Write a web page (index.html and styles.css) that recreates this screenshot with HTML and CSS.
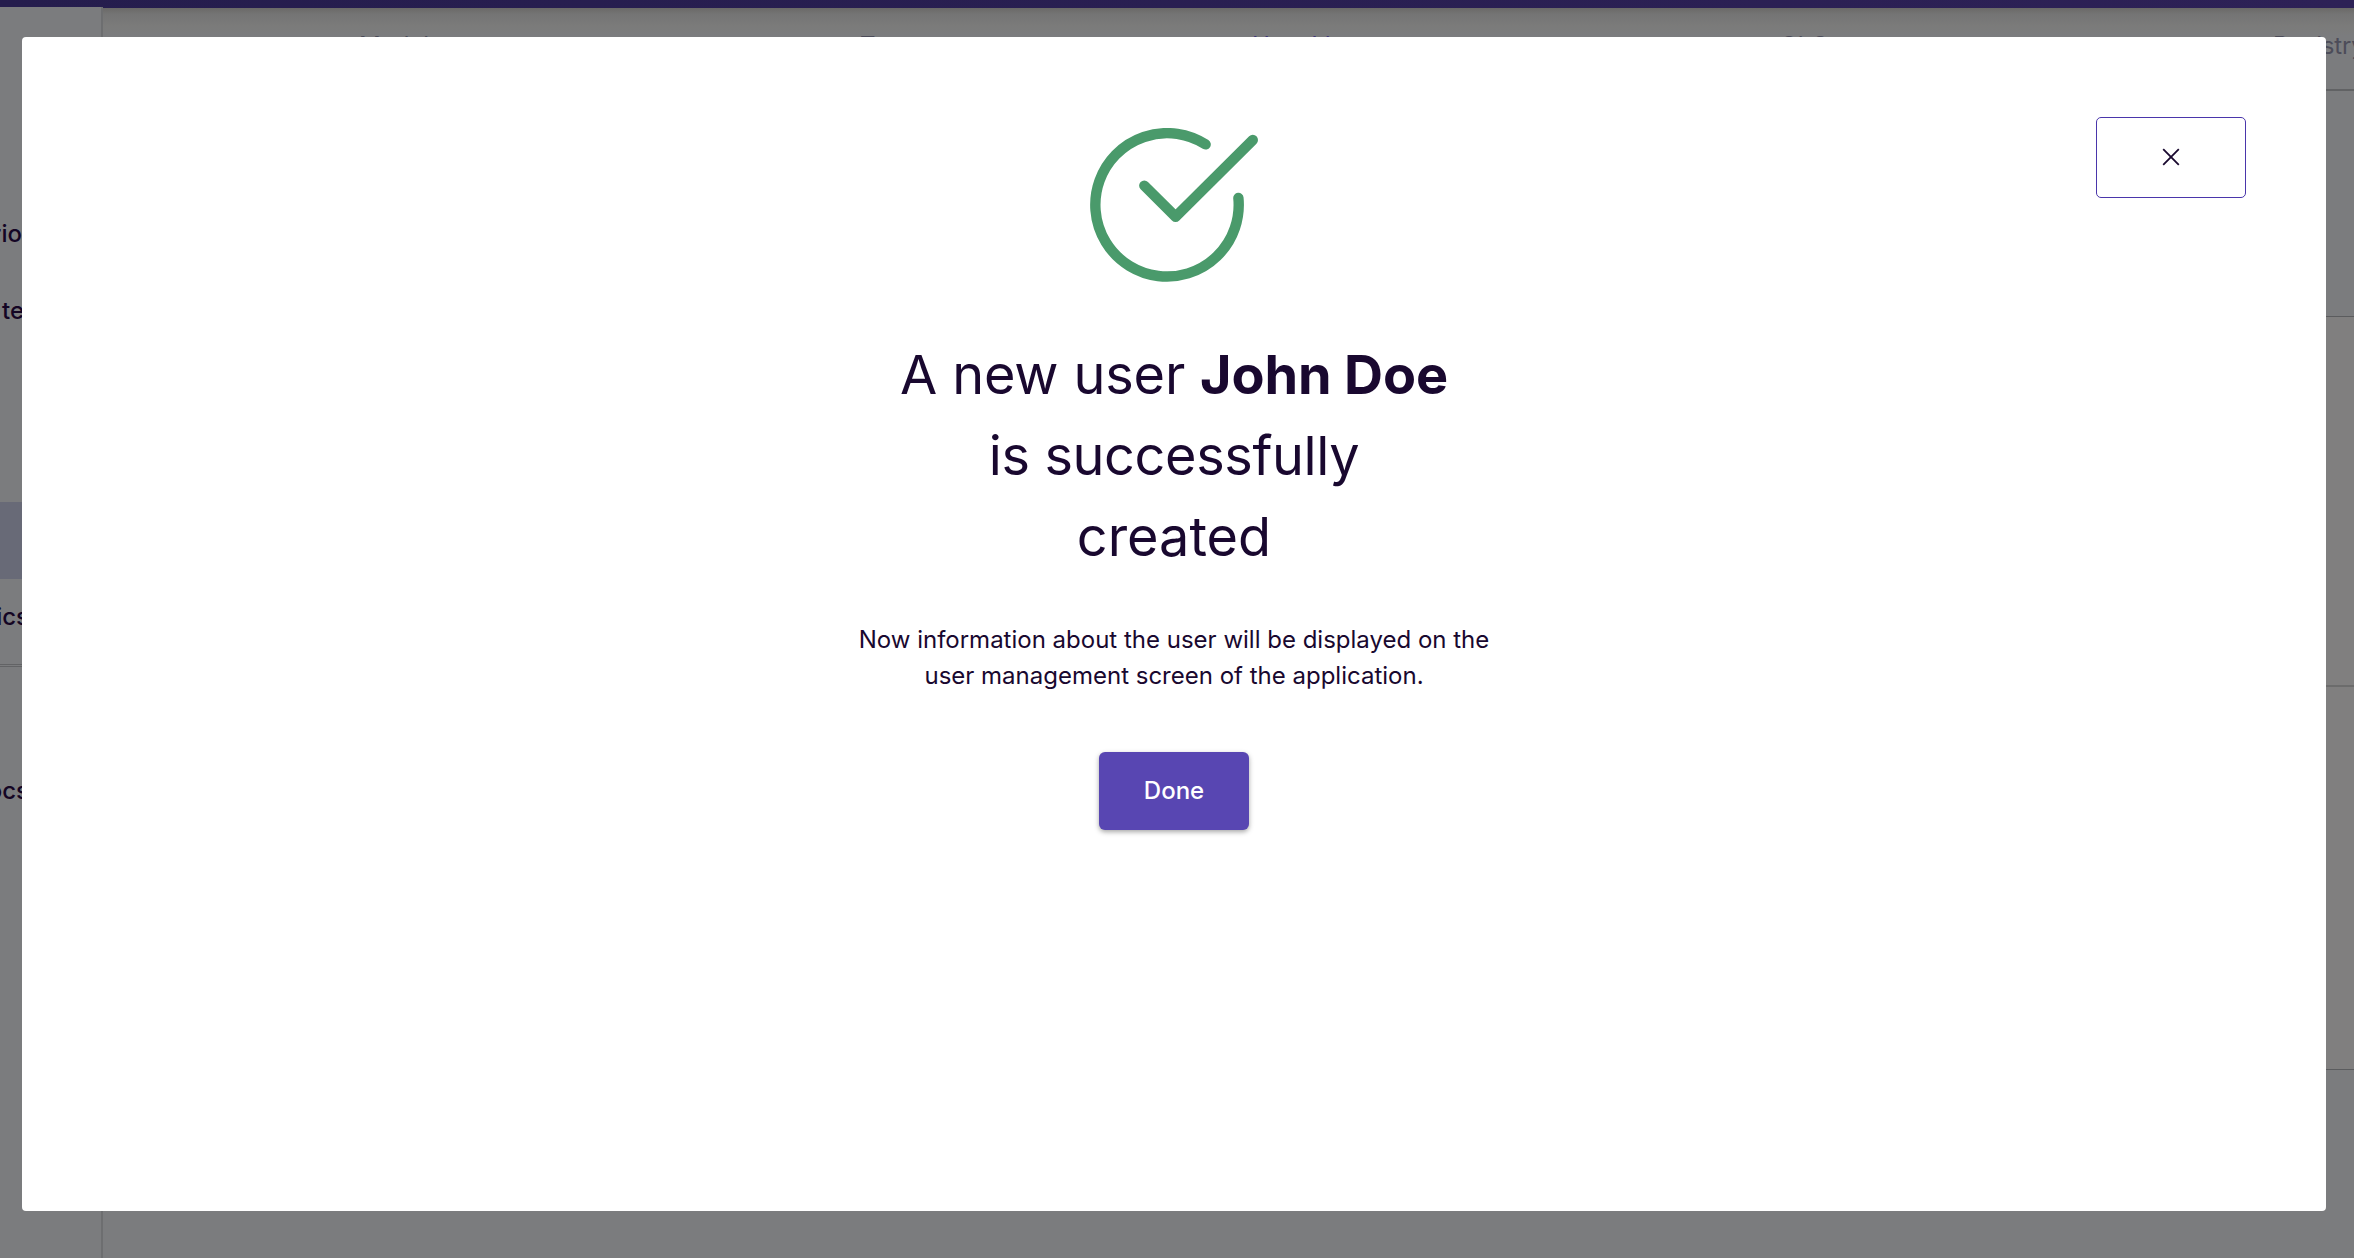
FILE: index.html
```html
<!DOCTYPE html>
<html lang="en">
<head>
<meta charset="utf-8">
<title>User created</title>
<link rel="stylesheet" href="styles.css">
</head>
<body>
<div class="app">
  <header class="topbar"></header>
  <div class="layout">
    <nav class="sidebar">
      <span class="nav-item nav-scenarios">rio</span>
      <span class="nav-item nav-templates">te</span>
      <span class="nav-item nav-active"></span>
      <span class="nav-item nav-topics">ics</span>
      <span class="nav-rule"></span>
      <span class="nav-item nav-docs">ocs</span>
    </nav>
    <main class="content">
      <div class="tabs">
        <span class="tab">Modules</span>
        <span class="tab">Teams</span>
        <span class="tab tab-active">User List</span>
        <span class="tab">GitOps</span>
        <span class="tab">Registry</span>
      </div>
      <div class="panel panel-filter"></div>
      <div class="panel panel-list"></div>
      <div class="panel panel-details"></div>
    </main>
  </div>
</div>
<div class="overlay">
  <section class="modal" role="dialog" aria-modal="true">
    <button class="close" aria-label="Close">
      <svg width="18" height="18" viewBox="0 0 18 18" fill="none" stroke="currentColor" stroke-width="1.8"><path d="M1.2 1.2 16.8 16.8M16.8 1.2 1.2 16.8"/></svg>
    </button>
    <svg class="success" width="168" height="154" viewBox="0 0 168 154" fill="none" stroke="currentColor" stroke-width="10.4" stroke-linecap="round" stroke-linejoin="round">
      <path d="M115.6 16.4A71.7 71.7 0 1 0 148.4 70"/>
      <path d="M54.3 57.6 85.6 88.8 162.8 12"/>
    </svg>
    <h1 class="title"><span class="title-lead">A new user <strong>John Doe</strong></span><br><span class="title-status">is successfully</span><br>created</h1>
    <p class="message">Now information about the user will be displayed on the<br>user management screen of the application.</p>
    <button class="done">Done</button>
  </section>
</div>
</body>
</html>
```
FILE: styles.css
```css
* { box-sizing: border-box; }
body {
  margin: 0;
  height: 1258px;
  overflow: hidden;
  font-family: Inter, "Liberation Sans", sans-serif;
  color: #19082f;
}
.app { height: 1258px; display: flex; flex-direction: column; background: #7b7c7e; }
.topbar { height: 8px; flex: none; background: linear-gradient(90deg, #251d4d, #2d2156); }
.layout { flex: 1; display: flex; }
.sidebar {
  width: 103px;
  flex: none;
  margin-top: -1px;
  display: flex;
  flex-direction: column;
  background: #7b7c7e;
  border-right: 2px solid #6d6e70;
  font-size: 24px;
  font-weight: 500;
  color: #140524;
}
.nav-item { height: 77px; line-height: 77px; display: flex; justify-content: flex-end; white-space: nowrap; }
.nav-scenarios { margin-top: 188px; width: 22px; }
.nav-templates { width: 24px; }
.nav-active { width: 100%; margin-top: 153px; background: #686a77; }
.nav-topics { width: 29px; line-height: 76px; }
.nav-rule { margin-top: 8px; height: 3px; border: solid #626365; border-width: 1px 0; }
.nav-docs { margin-top: 85px; width: 29px; }
.content { flex: 1; min-width: 0; display: flex; flex-direction: column; overflow: hidden; }
.tabs {
  height: 83px;
  flex: none;
  display: grid;
  grid-template-columns: 501px 392px 528px 493px auto;
  padding-left: 256px;
  border-bottom: 2px solid #616264;
  background: linear-gradient(#6a6967, #747474 6px, #7b7b7a 18px, #7b7c7e 28px);
}
.tab { font-size: 24px; line-height: 75px; color: #4c4c59; letter-spacing: -.2px; white-space: nowrap; }
.tab-active { color: #41377a; }
.panel { border-bottom: 1px solid #5b5c5e; flex: none; }
.panel-filter { height: 226px; }
.panel-list { height: 370px; background: #807f7f; border-bottom: 2px solid #6c6c6c; }
.panel-details { height: 383px; background: #807f7f; }
.overlay { position: absolute; inset: 0; padding: 37px 28px 47px 22px; display: flex; }
.modal {
  position: relative;
  flex: 1;
  display: flex;
  flex-direction: column;
  align-items: center;
  background: #fff;
  border-radius: 4px;
  padding-top: 91px;
}
.close {
  position: absolute;
  top: 80px;
  right: 80px;
  width: 150px;
  height: 81px;
  padding: 0 0 2px;
  display: flex;
  align-items: center;
  justify-content: center;
  background: #fff;
  color: #19082f;
  border: 1px solid #4a36ab;
  border-radius: 5px;
  appearance: none;
  outline: none;
}
.success { color: #4a9a6b; flex: none; }
.title { margin: 52px 0 0; font-size: 54px; line-height: 81px; font-weight: 400; text-align: center; }
.title strong { font-weight: 700; }
.title-lead { letter-spacing: -.15px; }
.title-status { letter-spacing: -.38px; }
.message { margin: 45px 0 0; font-size: 24px; line-height: 36px; text-align: center; }
.done {
  margin-top: 58px;
  width: 150px;
  height: 78px;
  padding: 0 0 1px;
  border: 0;
  border-radius: 6px;
  background: #5846b2;
  color: #fff;
  font: 500 24px Inter, "Liberation Sans", sans-serif;
  box-shadow: 0 2px 5px rgba(0, 0, 0, .35);
}
```
